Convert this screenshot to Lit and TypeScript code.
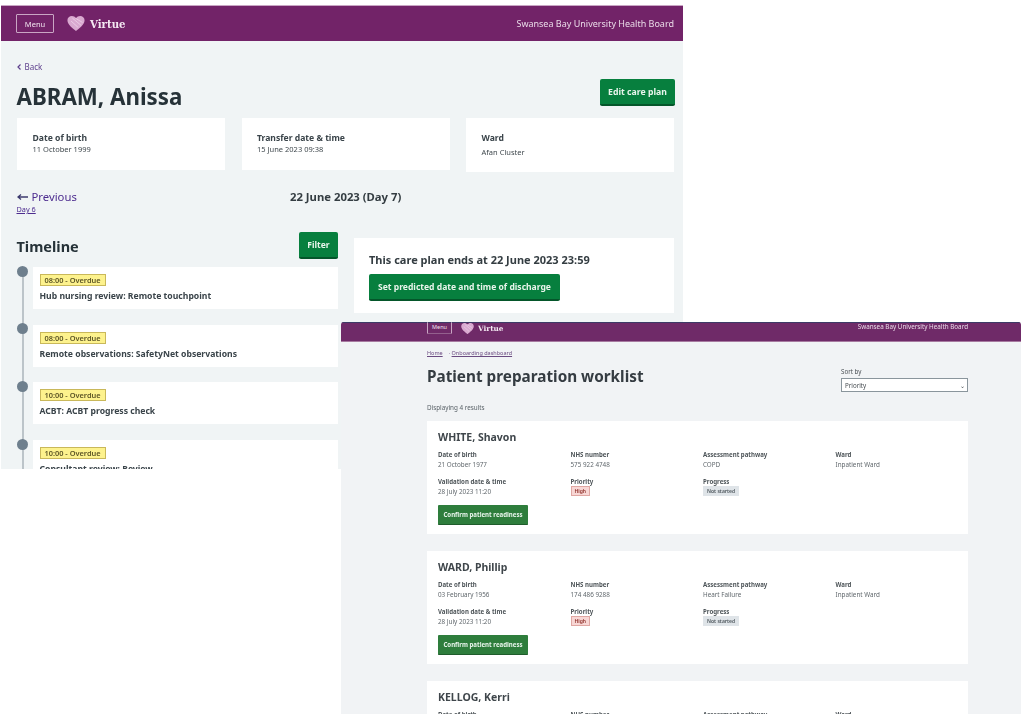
import { LitElement, html, css } from "lit";
import { customElement } from "lit/decorators.js";

const heart = (w: number, h: number) => html`<svg width=${w} height=${h} viewBox="0 0 24 21">
  <path d="M12 21C8 17.500 0 12.500 0 6C0 2.500 2.800 0 6.200 0C8.500 0 10.800 1.100 12 3C13.200 1.100 15.500 0 17.800 0C21.200 0 24 2.500 24 6C24 12.500 16 17.500 12 21Z" fill="#d9a9d0"/>
  <path d="M7 3L19 13M5 7L15 16M11 3L21 9" stroke="#efd9eb" stroke-width="1" fill="none"/>
</svg>`;

const tasks = [
  ["08:00 - Overdue", "Hub nursing review: Remote touchpoint"],
  ["08:00 - Overdue", "Remote observations: SafetyNet observations"],
  ["10:00 - Overdue", "ACBT: ACBT progress check"],
  ["10:00 - Overdue", "Consultant review: Review"],
];

const patients = [
  { name: "WHITE, Shavon", dob: "21 October 1977", nhs: "575 922 4748", path: "COPD" },
  { name: "WARD, Phillip", dob: "03 February 1956", nhs: "174 486 9288", path: "Heart Failure" },
  { name: "KELLOG, Kerri", dob: "12 March 1964", nhs: "402 118 6637", path: "COPD" },
];

@customElement("app-root")
export class AppRoot extends LitElement {
  static styles = css`
    :host { display: block; position: relative; width: 1024px; height: 714px; overflow: hidden; background: #fff;
      font-family: "Noto Sans", "Open Sans", sans-serif; color: #2f3a40; }
    .win { position: absolute; overflow: hidden; background: #f0f4f5; box-sizing: border-box; }
    .a { left: 1px; top: 5px; width: 682px; height: 464px; filter: blur(0.4px); }
    .b { left: 341px; top: 322px; width: 680px; height: 392px; background: #f1f3f5; filter: blur(0.75px); border-radius: 3px 3px 0 0; }
    header { display: flex; align-items: center; justify-content: space-between; background: #722368; color: #fff; box-sizing: border-box; }
    .a header { height: 36px; padding: 0 9px 0 15px; border-top: 1px solid #c9a6c4; }
    .b header { height: 20px; padding: 0 53px 0 86px; background: #6f2a68; border-top: 1px solid #3d3a66; border-bottom: 1px solid #a77aa0; align-items: flex-start; }
    .brand { display: flex; align-items: center; }
    .menu { display: flex; align-items: center; justify-content: center; box-sizing: border-box; border: 1px solid #c9a6c4; border-radius: 1px; color: #f1e4ef; }
    .a .menu { width: 38px; height: 19px; font-size: 7.500px; margin-right: 13px; }
    .b .menu { width: 25px; height: 12px; font-size: 5.500px; margin-top: -2px; margin-right: 9px; border-top: 0; border-bottom-color: #93608d; }
    .virtue { font-family: "DejaVu Serif", "Liberation Serif", serif; font-weight: 700; color: #f3e7f1; }
    .a .virtue { font-size: 10.200px; margin-left: 5px; }
    .b .virtue { font-size: 7.300px; margin-left: 4px; }
    .org { color: #eadbe8; }
    .a .org { font-size: 9px; }
    .b .org { font-size: 6.300px; margin-top: -1px; }

    .a-body { padding: 0 8px 0 15.500px; }
    .back { display: flex; gap: 4px; font-size: 8px; color: #5d3f8c; padding-top: 21px; line-height: 10px; height: 17px; align-items: flex-start; }
    .back svg { margin-top: 2px; }
    .title-row { display: flex; justify-content: space-between; align-items: flex-start; height: 39px; }
    h1 { margin: -1px 0 0; font-size: 22.300px; font-weight: 700; line-height: 38px; color: #263238; }
    .btn { display: flex; align-items: center; justify-content: center; box-sizing: border-box; background: #077f3e; color: #e9f5ec;
      font-weight: 700; border-radius: 2px; border-bottom: 2px solid #04562a; white-space: nowrap; }
    .title-row .btn { width: 75px; height: 27px; font-size: 8.700px; }
    .cards { display: grid; grid-template-columns: 208px 208px 208px; column-gap: 16.500px; margin-left: .5px; }
    .card { background: #fff; height: 52px; box-sizing: border-box; padding: 15px 15.500px 0; }
    .card:last-child { height: 54px; }
    .card b { display: block; font-size: 8.600px; line-height: 11px; color: #3a444a; }
    .card span { display: block; font-size: 7.500px; line-height: 11px; color: #40494e; }
    .card:last-child span { line-height: 17px; }
    .day-row { display: grid; grid-template-columns: 273.500px 1fr; margin-top: 16px; height: 44px; }
    .prev { font-size: 11.300px; line-height: 17px; color: #4d2c8f; display: flex; align-items: center; gap: 4px; }
    .dayl { font-size: 7.300px; line-height: 9px; color: #4d2c8f; text-decoration: underline; display: block; }
    .date { font-size: 11.300px; font-weight: 700; line-height: 17px; color: #343d42; }
    .cols { display: grid; grid-template-columns: 321.500px 320px; column-gap: 16px; align-items: start; }
    .tl-head { display: flex; justify-content: space-between; align-items: flex-start; height: 35px; }
    h2 { margin: 0; font-size: 14.500px; font-weight: 700; line-height: 28px; color: #263238; }
    .tl-head .btn { width: 39px; height: 27px; font-size: 8.500px; }
    .timeline { position: relative; display: flex; flex-direction: column; gap: 15.700px; padding-left: 16.500px; }
    .timeline::before { content: ""; position: absolute; left: 5px; top: 4px; bottom: 0; width: 2px; background: #bcc4c9; }
    .item { position: relative; background: #fff; height: 42px; box-sizing: border-box; padding: 7px 6.500px 0; }
    .item::before { content: ""; position: absolute; left: -16.500px; top: -1.500px; width: 11px; height: 11px; border-radius: 50%; background: #6e7f8d; }
    .tag { display: block; width: fit-content; background: #fdf28d; border: 1px solid #c9b85a; color: #5c5526; font-size: 7.400px; line-height: 10px; padding: 0 4px; font-weight: 600; }
    .item p { margin: 4px 0 0; font-size: 8.650px; line-height: 12px; font-weight: 700; color: #3a444a; }
    .plan { background: #fff; height: 75px; box-sizing: border-box; padding: 15px 15px 0; margin-top: 6px; }
    .plan b { display: block; font-size: 11px; line-height: 14px; color: #343d42; }
    .plan .btn { width: 191px; height: 27px; margin-top: 7px; font-size: 8.550px; }

    .b-body { padding: 0 53px 0 86px; }
    .crumbs { font-size: 5.500px; line-height: 8px; padding-top: 7px; color: #6a4a80; height: 10px; }
    .crumbs u { margin-right: 6px; }
    .head2 { display: flex; justify-content: space-between; align-items: flex-start; margin-top: 4px; height: 36.500px; }
    .head2 h1 { font-size: 15.300px; line-height: 26px; margin: 0; color: #353c42; }
    .sort { width: 127px; margin-top: 4px; }
    .sort label { display: block; font-size: 6.200px; line-height: 9px; color: #4a5055; margin-bottom: 2px; }
    .select { display: flex; align-items: center; justify-content: space-between; box-sizing: border-box; height: 14px; background: #fff; border: 1px solid #8a959c; font-size: 6.200px; padding: 0 2px 0 3px; color: #454b50; }
    .count { font-size: 6.300px; line-height: 9px; color: #5a6268; margin-top: 3px; height: 9.500px; padding-bottom: 9px; }
    .list { display: flex; flex-direction: column; gap: 17px; }
    .pt { background: #fff; height: 113px; box-sizing: border-box; padding: 9px 11px 0; flex: none; }
    .pt h3 { margin: 0 0 5.500px; font-size: 10.500px; line-height: 14px; font-weight: 700; color: #3f464b; }
    .grid { display: grid; grid-template-columns: repeat(4, 132.500px); row-gap: 7px; }
    .f b { display: block; font-size: 6.100px; line-height: 9px; font-weight: 700; color: #4e5559; }
    .f span { display: block; font-size: 6.300px; line-height: 11px; color: #61686d; }
    .f .pill { display: block; width: fit-content; font-size: 5px; line-height: 8px; padding: 0 3px; font-weight: 600; }
    .high { background: #f8d7d5; border: 1px solid #e0a7a3; color: #8c2b25 !important; }
    .ns { background: #dfe4e8; border: 1px solid #dfe4e8; color: #4d565c !important; }
    .pt .btn { width: 90px; height: 20px; margin-top: 8px; font-size: 6.100px; background: #2e7d3c; border-bottom: 1px solid #1f5c2b; border-radius: 1px; }
  `;

  render() {
    return html`
      <section class="win a">
        <header>
          <div class="brand"><span class="menu">Menu</span>${heart(18, 15)}<span class="virtue">Virtue</span></div>
          <span class="org">Swansea Bay University Health Board</span>
        </header>
        <div class="a-body">
          <div class="back"><svg width="4" height="6" viewBox="0 0 4 6"><path d="M3.500 .5L1 3L3.500 5.500" stroke="#5d3f8c" stroke-width="1.200" fill="none"/></svg>Back</div>
          <div class="title-row">
            <h1>ABRAM, Anissa</h1>
            <span class="btn">Edit care plan</span>
          </div>
          <div class="cards">
            <div class="card"><b>Date of birth</b><span>11 October 1999</span></div>
            <div class="card"><b>Transfer date &amp; time</b><span>15 June 2023 09:38</span></div>
            <div class="card"><b>Ward</b><span>Afan Cluster</span></div>
          </div>
          <div class="day-row">
            <div>
              <div class="prev"><svg width="11" height="6" viewBox="0 0 11 6"><path d="M11 3H2M4 .5L1 3L4 5.500" stroke="#3c3a6e" stroke-width="1.300" fill="none"/></svg>Previous</div>
              <span class="dayl">Day 6</span>
            </div>
            <div class="date">22 June 2023 (Day 7)</div>
          </div>
          <div class="cols">
            <div>
              <div class="tl-head"><h2>Timeline</h2><span class="btn">Filter</span></div>
              <div class="timeline">
                ${tasks.map(t => html`<div class="item"><span class="tag">${t[0]}</span><p>${t[1]}</p></div>`)}
              </div>
            </div>
            <div class="plan">
              <b>This care plan ends at 22 June 2023 23:59</b>
              <span class="btn">Set predicted date and time of discharge</span>
            </div>
          </div>
        </div>
      </section>

      <section class="win b">
        <header>
          <div class="brand"><span class="menu">Menu</span>${heart(13, 11)}<span class="virtue">Virtue</span></div>
          <span class="org">Swansea Bay University Health Board</span>
        </header>
        <div class="b-body">
          <div class="crumbs"><u>Home</u>· <u>Onboarding dashboard</u></div>
          <div class="head2">
            <h1>Patient preparation worklist</h1>
            <div class="sort"><label>Sort by</label><div class="select">Priority<span>⌄</span></div></div>
          </div>
          <div class="count">Displaying 4 results</div>
          <div class="list">
            ${patients.map(p => html`<article class="pt">
              <h3>${p.name}</h3>
              <div class="grid">
                <div class="f"><b>Date of birth</b><span>${p.dob}</span></div>
                <div class="f"><b>NHS number</b><span>${p.nhs}</span></div>
                <div class="f"><b>Assessment pathway</b><span>${p.path}</span></div>
                <div class="f"><b>Ward</b><span>Inpatient Ward</span></div>
                <div class="f"><b>Validation date &amp; time</b><span>28 July 2023 11:20</span></div>
                <div class="f"><b>Priority</b><span class="pill high">High</span></div>
                <div class="f"><b>Progress</b><span class="pill ns">Not started</span></div>
              </div>
              <span class="btn">Confirm patient readiness</span>
            </article>`)}
          </div>
        </div>
      </section>
    `;
  }
}
